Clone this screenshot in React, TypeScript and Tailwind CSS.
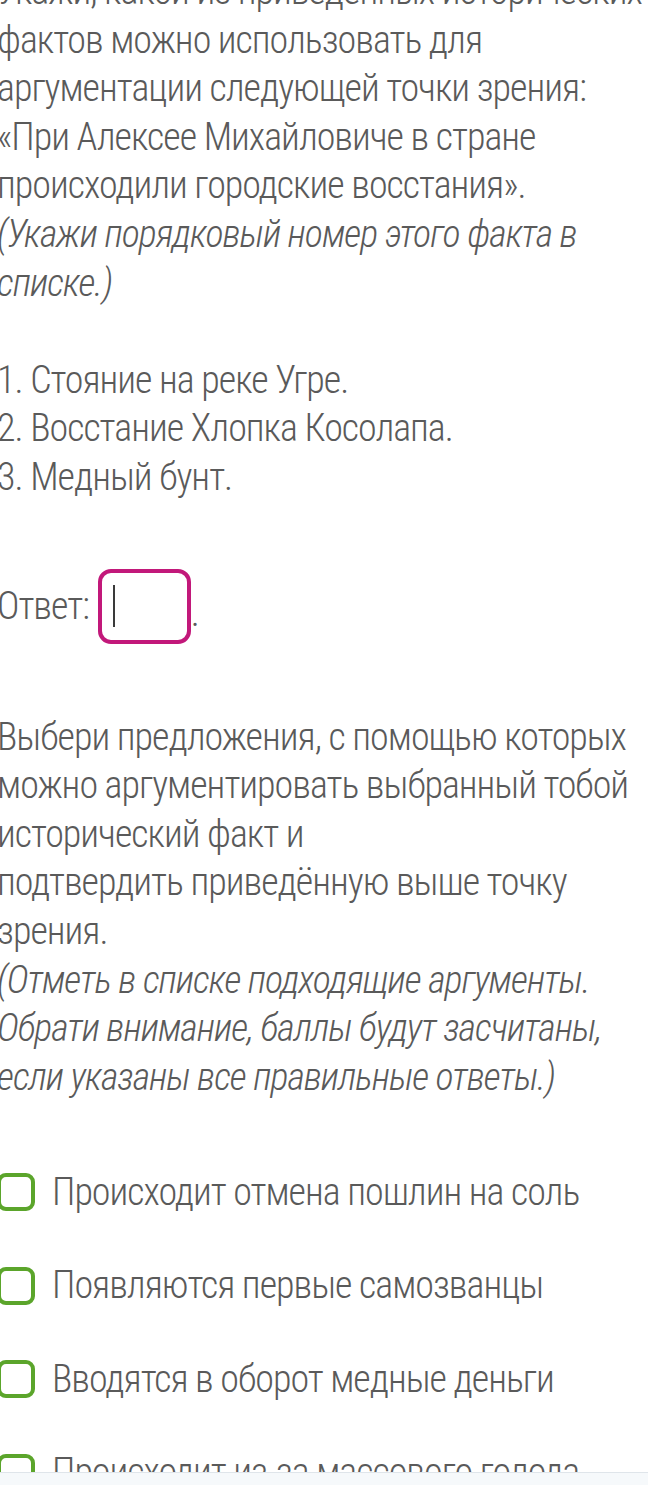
import React from 'react';

const intro = [
  'Укажи, какой из приведённых исторических',
  'фактов можно использовать для',
  'аргументации следующей точки зрения:',
  '«При Алексее Михайловиче в стране',
  'происходили городские восстания».',
];

const facts = ['1. Стояние на реке Угре.', '2. Восстание Хлопка Косолапа.', '3. Медный бунт.'];

const prompt = [
  'Выбери предложения, с помощью которых',
  'можно аргументировать выбранный тобой',
  'исторический факт и',
  'подтвердить приведённую выше точку',
  'зрения.',
];

const hint = [
  '(Отметь в списке подходящие аргументы.',
  'Обрати внимание, баллы будут засчитаны,',
  'если указаны все правильные ответы.)',
];

const options = [
  'Происходит отмена пошлин на соль',
  'Появляются первые самозванцы',
  'Вводятся в оборот медные деньги',
  'Происходит из-за массового голода',
];

function Lines({ items, italic }: { items: string[]; italic?: boolean }) {
  return (
    <div className={italic ? 'italic' : ''}>
      {items.map((t) => (
        <div key={t} className="whitespace-nowrap">
          {t}
        </div>
      ))}
    </div>
  );
}

export default function App() {
  return (
    <div className="relative h-[1485px] w-[648px] overflow-hidden bg-white font-['Roboto',sans-serif] text-[38px] font-light leading-[48.6px] tracking-[-1px] text-[#5a5a5a] font-stretch-condensed">
      <div className="-ml-[3px] -mt-[33px]">
        <Lines items={intro} />
        <Lines items={['(Укажи порядковый номер этого факта в', 'списке.)']} italic />

        <div className="mt-[48.6px]">
          <Lines items={facts} />
        </div>

        <div className="mt-[67px] flex items-center">
          <span>Ответ:</span>
          <div className="ml-[9px] flex h-[75px] w-[93px] items-center rounded-[13px] border-[4px] border-[#c2187a] pl-[11px]">
            <div className="h-[42px] w-[2px] bg-[#3a3a3a]" />
          </div>
          <span className="mb-[6px] self-end">.</span>
        </div>

        <div className="mt-[69px]">
          <Lines items={prompt} />
          <Lines items={hint} italic />
        </div>

        <div className="mt-[71px] flex flex-col gap-[53.5px]">
          {options.map((o) => (
            <label key={o} className="flex h-[40px] items-center gap-[17px]">
              <span className="h-[38px] w-[38px] shrink-0 rounded-[9px] border-[4px] border-[#5ba52b]" />
              <span className="whitespace-nowrap">{o}</span>
            </label>
          ))}
        </div>
      </div>

      <div className="absolute bottom-0 left-0 h-[13px] w-full border-t border-[#dfe5ea] bg-[#f6f9fb]" />
    </div>
  );
}
